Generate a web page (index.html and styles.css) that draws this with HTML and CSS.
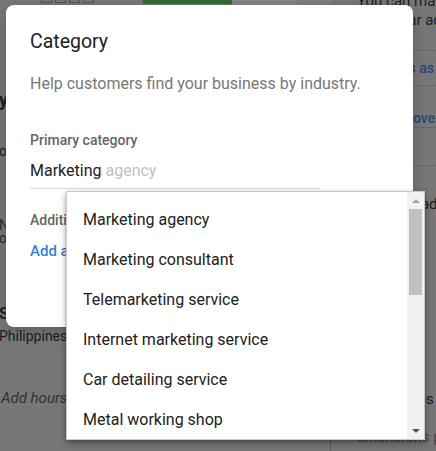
FILE: index.html
```html
<!DOCTYPE html>
<html lang="en">
<head>
<meta charset="utf-8">
<title>Category</title>
<link rel="stylesheet" href="styles.css">
</head>
<body>
  <div class="page">
    <div class="left-col">
      <div class="thumbs">
        <span class="sq"></span><span class="sq"></span><span class="sq"></span><span class="sq"></span>
        <span class="green"></span>
        <span class="lite"></span>
        <span class="lite2"></span>
      </div>
      <div class="lc lc-y">your</div>
      <div class="lc lc-o">open</div>
      <div class="lc lc-n">Name<br>on</div>
      <div class="lc lc-s">Service area</div>
      <div class="lc lc-ph">Philippines</div>
      <div class="lc lc-add">Add hours</div>
      <div class="lc-foot"></div>
    </div>
    <div class="right-col">
      <div class="rc-row rc-text">You can mark your business as closed<br>from your account.</div>
      <div class="rc-row rc-link1"><span class="rlink">Mark this as closed</span></div>
      <div class="rc-row rc-link2"><span class="rlink">Also remove this</span></div>
      <div class="rc-row rc-empty"></div>
      <div class="rc-line rc-d">Products added</div>
      <div class="rc-line rc-s">Add photos</div>
      <div class="rc-line rc-ext">extensions page</div>
    </div>
  </div>

  <div class="dialog">
    <h2 class="dlg-title">Category</h2>
    <p class="dlg-sub">Help customers find your business by industry.</p>
    <div class="field-label">Primary category</div>
    <div class="field-input"><span class="typed">Marketing</span><span class="hint"> agency</span></div>
    <div class="field-label field-label2">Additional categories</div>
    <div class="add-link">Add another category</div>
  </div>

  <div class="menu">
    <ul class="menu-list">
      <li class="item">Marketing agency</li>
      <li class="item">Marketing consultant</li>
      <li class="item">Telemarketing service</li>
      <li class="item">Internet marketing service</li>
      <li class="item">Car detailing service</li>
      <li class="item">Metal working shop</li>
      <li class="item">Marketing research</li>
    </ul>
    <div class="scrollbar">
      <div class="sb-btn"><span class="arrow-up"></span></div>
      <div class="thumb"></div>
      <div class="sb-space"></div>
      <div class="sb-btn"><span class="arrow-down"></span></div>
    </div>
  </div>
</body>
</html>
```

FILE: styles.css
```css
html, body {
  margin: 0;
  padding: 0;
}

body {
  width: 436px;
  height: 451px;
  overflow: hidden;
  position: relative;
  background: #777777;
  font-family: Roboto, "Liberation Sans", Arial, sans-serif;
  color: #202124;
}

/* ---------- dimmed page behind the dialog ---------- */
.page {
  display: grid;
  grid-template-columns: 357px 1fr;
  height: 451px;
  overflow: hidden;
}

.left-col {
  display: flex;
  flex-direction: column;
  min-width: 0;
}

.thumbs {
  height: 5px;
  display: flex;
  align-items: flex-end;
  overflow: hidden;
  padding-left: 41px;
}

.sq {
  width: 11px;
  height: 11px;
  box-sizing: border-box;
  border: 1px solid #555555;
  margin-right: 3px;
  margin-bottom: 2px;
  flex: none;
}

.green {
  width: 89px;
  height: 8px;
  margin-left: 46px;
  margin-bottom: 1px;
  background: #2e6b36;
  flex: none;
}

.lite {
  width: 65px;
  height: 8px;
  background: #858585;
  flex: none;
}

.lite2 {
  width: 35px;
  height: 8px;
  background: #7e7e7e;
  flex: none;
}

.lc {
  white-space: nowrap;
  color: #1c1c1c;
  margin-left: -1px;
}

.lc-y {
  font-size: 18px;
  font-weight: 700;
  line-height: 20px;
  margin-top: 85px;
}

.lc-o {
  font-size: 14px;
  line-height: 20px;
  margin-top: 31px;
}

.lc-n {
  font-size: 14px;
  line-height: 13px;
  margin-top: 58px;
  color: #2a2a2a;
}

.lc-s {
  font-size: 16px;
  font-weight: 500;
  line-height: 20px;
  margin-top: 59px;
}

.lc-ph {
  font-size: 14px;
  line-height: 20px;
  margin-top: 2px;
}

.lc-add {
  font-size: 15px;
  font-style: italic;
  line-height: 20px;
  margin-top: 42px;
  margin-left: 1px;
  color: #333333;
}

.lc-foot {
  margin-top: auto;
  height: 11px;
  width: 330px;
  border-right: 1px solid #5f5f5f;
}

.right-col {
  display: flex;
  flex-direction: column;
  min-width: 0;
  white-space: nowrap;
}

.rc-row {
  border-bottom: 1px solid #686868;
}

.rc-text {
  margin-top: -8px;
  font-size: 15px;
  line-height: 19px;
  padding-bottom: 20px;
  color: #1e1e1e;
}

.rc-link1 {
  padding: 7px 0;
  font-size: 14px;
  line-height: 20px;
}

.rc-link2 {
  padding-top: 23px;
  font-size: 14px;
  line-height: 18px;
}

.rlink {
  color: #26477a;
  font-weight: 500;
}

.rc-empty {
  height: 37px;
}

.rc-line {
  font-size: 15px;
  line-height: 19px;
  color: #1e1e1e;
}

.rc-d {
  margin-top: 29px;
}

.rc-s {
  margin-top: 176px;
}

.rc-ext {
  margin-top: 19px;
  color: #454545;
}

/* ---------- dialog ---------- */
.dialog {
  position: absolute;
  left: 6px;
  top: 5px;
  width: 407px;
  height: 322px;
  box-sizing: border-box;
  padding: 23px 24px 0 24px;
  background: #ffffff;
  border-radius: 8px;
  box-shadow: 0 4px 14px rgba(0, 0, 0, 0.22);
}

.dlg-title {
  margin: 0;
  font-size: 19.5px;
  font-weight: 400;
  line-height: 28px;
  color: #202124;
}

.dlg-sub {
  margin: 16px 0 0 0;
  font-size: 16px;
  line-height: 24px;
  color: #787878;
}

.field-label {
  margin-top: 34px;
  font-size: 14px;
  font-weight: 500;
  line-height: 20px;
  color: #656565;
}

.field-input {
  margin-top: 9px;
  width: 290px;
  padding-bottom: 5px;
  border-bottom: 1px solid #dadada;
  font-size: 16px;
  line-height: 24px;
  white-space: nowrap;
}

.typed {
  color: #212121;
}

.hint {
  color: #bfbfbf;
}

.field-label2 {
  margin-top: 21px;
}

.add-link {
  margin-top: 11px;
  font-size: 15px;
  font-weight: 500;
  line-height: 20px;
  color: #3081d0;
}

/* ---------- dropdown ---------- */
.menu {
  position: absolute;
  left: 66px;
  top: 191px;
  width: 359px;
  height: 249px;
  box-sizing: border-box;
  border: 1px solid #c9c9c9;
  background: #ffffff;
  box-shadow: 0 2px 4px rgba(0, 0, 0, 0.3), 0 4px 10px rgba(0, 0, 0, 0.18);
  display: flex;
}

.menu-list {
  flex: 1;
  min-width: 0;
  margin: 0;
  padding: 8px 0 0 0;
  list-style: none;
  overflow: hidden;
}

.item {
  height: 40px;
  line-height: 40px;
  padding-left: 16px;
  font-size: 16px;
  color: #212121;
  white-space: nowrap;
}

.scrollbar {
  width: 17px;
  flex: none;
  background: #f1f1f1;
  display: flex;
  flex-direction: column;
}

.sb-btn {
  height: 17px;
  display: flex;
  align-items: center;
  justify-content: center;
  flex: none;
}

.arrow-up {
  width: 0;
  height: 0;
  border-left: 4px solid transparent;
  border-right: 4px solid transparent;
  border-bottom: 4px solid #a3a3a3;
}

.arrow-down {
  width: 0;
  height: 0;
  border-left: 4px solid transparent;
  border-right: 4px solid transparent;
  border-top: 4px solid #505050;
}

.thumb {
  height: 86px;
  margin: 0 2px;
  background: #c1c1c1;
  flex: none;
}

.sb-space {
  flex: 1;
}
```
